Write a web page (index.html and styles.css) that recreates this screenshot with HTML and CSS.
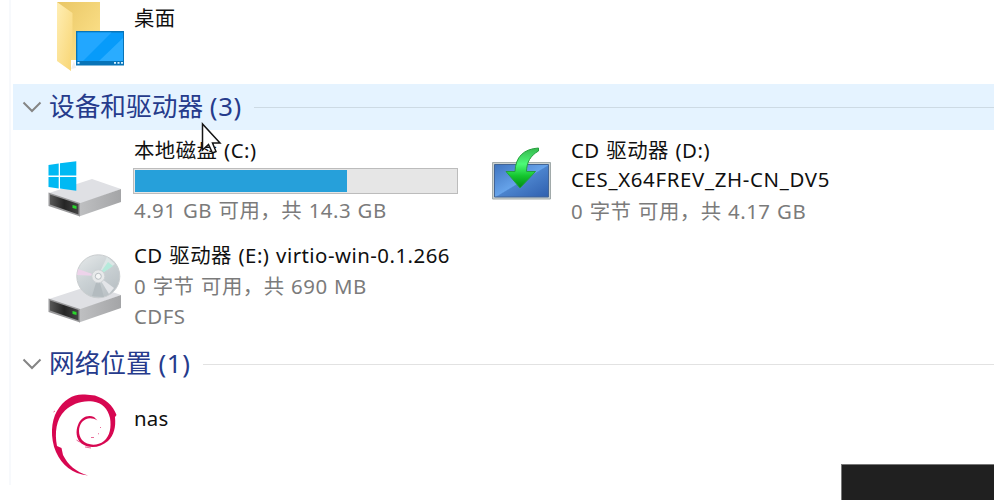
FILE: index.html
```html
<!DOCTYPE html>
<html lang="zh-CN">
<head>
<meta charset="utf-8">
<title>此电脑</title>
<link rel="stylesheet" href="styles.css">
</head>
<body>
<main class="pane">
  <section class="tiles folders">
    <article class="tile">
      <svg class="icon" width="78" height="84" viewBox="46 0 78 84">
        <defs>
          <linearGradient id="fb" x2="1" y2="1"><stop stop-color="#e9c665"/><stop offset="1" stop-color="#ffe58f"/></linearGradient>
          <linearGradient id="ff" x2="1" y2="1"><stop stop-color="#ffeeb4"/><stop offset="1" stop-color="#f8d573"/></linearGradient>
        </defs>
        <path d="M57 2h43v58H66z" fill="url(#fb)"/>
        <path d="M71 69l3-8 2 7z" fill="#eee"/>
        <path d="M57 2l15.500 11v39l-1.500 4v15L57 61z" fill="url(#ff)"/>
        <path d="M76 31h48.500v34.500H76z" fill="#0874b8"/>
        <path d="M77.500 32.500h45.500v28.500H77.500z" fill="#079bfa"/>
        <path d="M77.500 32.500h34L83 61h-5.500z" fill="#22a7ff"/>
        <path d="M123 38v23H99z" fill="#2aacff"/>
        <path d="M77.500 62h2v1.800h-2zM114 62h2v1.800h-2zM117.500 62h2v1.800h-2zM121 62h2v1.800h-2z" fill="#d9f2ff"/>
      </svg>
      <div class="info"><p class="name">桌面</p></div>
    </article>
  </section>

  <h2 class="group active">
    <svg class="chevron" width="20" height="12" viewBox="0 0 20 12"><path d="M1.500 1.500L10 10l8.500-8.500"/></svg>
    <span class="title">设备和驱动器 <span class="count">(3)</span></span>
  </h2>
  <section class="tiles drives">
    <article class="tile">
      <svg class="icon" width="78" height="105" viewBox="46 136 78 105">
        <defs>
          <linearGradient id="side" x2="1" y2="0"><stop stop-color="#bfc0c2"/><stop offset="1" stop-color="#a4a5a7"/></linearGradient>
          <linearGradient id="dark" x2="1"><stop stop-color="#585858"/><stop offset=".5" stop-color="#252525"/><stop offset="1" stop-color="#444"/></linearGradient>
          <g id="drive">
            <path d="M49 193l43-14 29 10-41 15z" fill="#dfe0e4"/>
            <path d="M79 203.500l42-14.500v13l-42 14.500z" fill="url(#side)"/>
            <path d="M48.500 192.500L80 203v13.500L48.500 206z" fill="#99999b"/>
            <path d="M50 194.500l28.500 9.500v10.500L50 204.500z" fill="url(#dark)"/>
            <path d="M72.500 205l4 1v3l-4-1z" fill="#2ad62c"/>
          </g>
        </defs>
        <use href="#drive"/>
        <path d="M48.500 165l10.200-1.500v12H48.500zM60 163.200l16.300-2v14.300H60zM48.500 177h10.200v11.500l-10.200-1.500zM60 177h16.300v13.800L60 188.500z" fill="#00b9f3"/>
      </svg>
      <div class="info">
        <p class="name">本地磁盘 <span class="ltr">(C:)</span></p>
        <div class="meter"><div class="used" style="width:65.9%"></div></div>
        <p class="meta">4.91 GB 可用，共 14.3 GB</p>
      </div>
    </article>
    <article class="tile">
      <svg class="icon" width="78" height="105" viewBox="483 136 78 105">
        <defs>
          <linearGradient id="scr" x2="1" y2="1"><stop stop-color="#3f74bf"/><stop offset=".5" stop-color="#66a3ea"/><stop offset=".52" stop-color="#4b83cd"/><stop offset="1" stop-color="#2f5fae"/></linearGradient>
          <linearGradient id="arr" x2="0" y2="1"><stop stop-color="#36b84e"/><stop offset=".4" stop-color="#4dfa78"/><stop offset=".7" stop-color="#14c52e"/><stop offset="1" stop-color="#008a12"/></linearGradient>
        </defs>
        <path d="M492.500 162.500h58v36.500h-58z" fill="#cbd2d1" stroke="#a1aaaa"/>
        <path d="M494.500 164.500h54v32.500h-54z" fill="url(#scr)" stroke="#426596"/>
        <path d="M538.500 148c-15 1-23 9-23.500 23.500h-9l14 16.500L535.500 171.500h-9c0-9 4-16 12-20.500z" fill="url(#arr)" stroke="#259f3d"/>
      </svg>
      <div class="info">
        <p class="name">CD 驱动器 <span class="ltr">(D:)</span></p>
        <p class="name label">CES_X64FREV_ZH-CN_DV5</p>
        <p class="meta">0 字节 可用，共 4.17 GB</p>
      </div>
    </article>
    <article class="tile">
      <svg class="icon" width="78" height="100" viewBox="46 241 78 100">
        <defs><linearGradient id="cd" x2=".7" y2="1"><stop stop-color="#e7eaeb"/><stop offset=".5" stop-color="#cbd2d5"/><stop offset="1" stop-color="#b9c0c4"/></linearGradient></defs>
        <use href="#drive" y="106"/>
        <circle cx="98.300" cy="276.300" r="21.500" fill="url(#cd)" stroke="#c9cdcf"/>
        <path d="M98 276l9-19 8 7z" fill="#dde6e6"/>
        <path d="M98 276l10-14 5 4z" fill="#b5eadb"/>
        <path d="M98 276l-20-7-1 6z" fill="#edd3ea"/>
        <path d="M98 276l16 12-5 6z" fill="#e3e5e8"/>
        <path d="M98 276l-6 20 12 1z" fill="#b3bbbf"/>
        <circle cx="98.300" cy="276.300" r="6.500" fill="#e7e9ea" stroke="#cdd1d4"/>
        <circle cx="98.300" cy="276.300" r="3" fill="#f4f5f5" stroke="#b8bec2"/>
      </svg>
      <div class="info">
        <p class="name">CD 驱动器 <span class="ltr">(E:) virtio-win-0.1.266</span></p>
        <p class="meta">0 字节 可用，共 690 MB</p>
        <p class="meta">CDFS</p>
      </div>
    </article>
  </section>

  <h2 class="group">
    <svg class="chevron" width="20" height="12" viewBox="0 0 20 12"><path d="M1.500 1.500L10 10l8.500-8.500"/></svg>
    <span class="title">网络位置 <span class="count">(1)</span></span>
  </h2>
  <section class="tiles network">
    <article class="tile">
      <svg class="icon" width="78" height="98" viewBox="46 387 78 98">
        <path fill="#d70751" d="M88 475.500C72 474 62 465 56 452 50 438 51 421 57 411 64 399 74 393.500 85 394.500L95 395.500C105 399 113 405 116.500 415L115 417C116 427 114 435 108 441 100 448 89 449 81.500 443.500 76 439 75.500 431 78 425 81 417 88 414.500 94 417L97.500 420.500C92 417 86 417.500 82 422 78 427 78 435 82 440 87 445.500 97 446.500 104 441 110 436 111.500 427 110 418 108 409 102 402.500 93 401.500 82 400 72 404 65 410.500 56 419 54.500 433 57 446L61.500 448 63 455C68 465 76 472 88 475.500Z"/>
        <path d="M53.500 412l1.500-1M76.500 440l3 2m-1-6l-1 1M91 437.500h3M98 433.500l1 .5M100 427l1 1M85 447l6 1" stroke="#d70751" stroke-opacity=".6" fill="none"/>
      </svg>
      <div class="info"><p class="name plain">nas</p></div>
    </article>
  </section>
</main>
<div class="overlay"></div>
<svg class="cursor" width="22" height="34" viewBox="0 0 22 34"><path d="M2.500 2v26l6-5.500 4 8.500 3.500-1.500-3.500-8.500H20z"/></svg>
</body>
</html>
```
FILE: styles.css
```css
* { box-sizing: border-box; }
body {
  margin: 0;
  width: 994px;
  height: 500px;
  overflow: hidden;
  position: relative;
  background: #fff;
  color: #101010;
  font-family: "Noto Sans", "Noto Sans CJK SC", sans-serif;
  font-size: 20.4px;
}
p, h2 { margin: 0; font-weight: 400; }
.pane {
  height: 485px;
  margin-left: 9px;
  border-left: 2px solid #f7f9fc;
  overflow: hidden;
}
.tiles { display: grid; grid-template-columns: 437px 1fr; padding-left: 35px; }
.folders { height: 84px; }
.drives { grid-template-rows: 105px 100px; padding-top: 6px; }
.network { height: 98px; }
.tile { display: flex; gap: 10px; min-width: 0; }
.icon { display: block; flex: none; }
.info { white-space: nowrap; }
.folders .info { padding-top: 3px; }
.network .info { padding-top: 17px; }
.name, .meta { height: 30.5px; line-height: 28px; letter-spacing: .48px; word-spacing: .8px; }
.label { line-height: 25px; letter-spacing: .67px; }
.plain { letter-spacing: .2px; }
.folders .name { line-height: 30px; }
.meta { color: #7b7b7b; }
.meter {
  width: 325px;
  height: 26px;
  margin: 1.500px 0 2px -1px;
  padding: 1px;
  border: 1px solid #bcbcbc;
  background: #e6e6e6;
}
.used { height: 100%; background: #26a0da; }
.group {
  display: flex;
  align-items: center;
  height: 46px;
  margin-left: 2px;
  padding-left: 9px;
  color: #263b8c;
  font-size: 25.7px;
  line-height: 46px;
}
.group::after { content: ""; flex: 1; height: 1px; margin-left: 12px; background: #e2e2e2; }
.active { background: #e5f3ff; }
.active::after { background: #cddae4; }
.chevron { flex: none; margin-right: 7px; fill: none; stroke: #858585; stroke-width: 2; }
.title { white-space: nowrap; }
.count { letter-spacing: .7px; }
.overlay {
  position: absolute;
  left: 841px;
  top: 464px;
  width: 153px;
  height: 36px;
  background: #202020;
  border: solid #777;
  border-width: 1px 0 0 1px;
}
.cursor { position: absolute; left: 200px; top: 122px; fill: #fff; stroke: #151515; stroke-width: 1.500; }
```
